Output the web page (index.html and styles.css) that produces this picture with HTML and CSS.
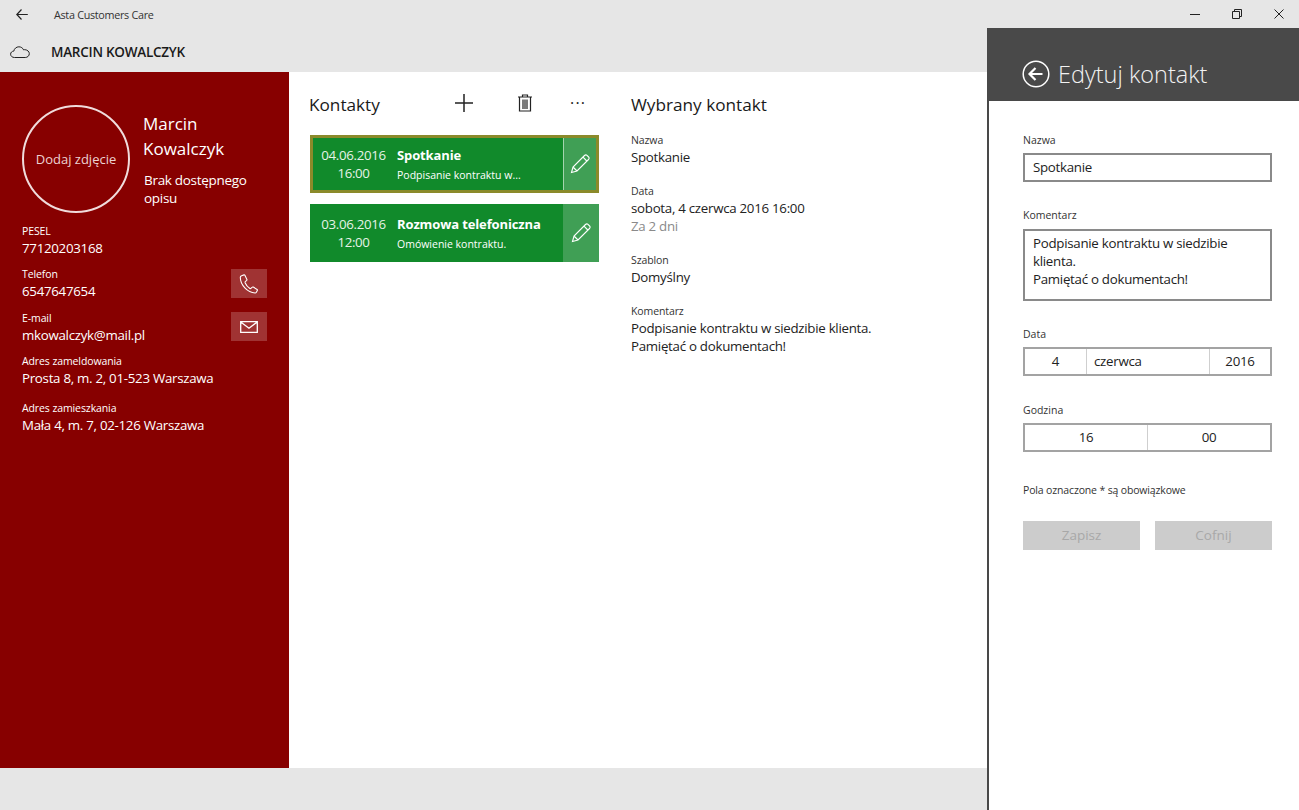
FILE: index.html
```html
<!DOCTYPE html>
<html lang="pl">

<head>
	<meta charset="UTF-8" />
	<title>Asta Customers Care</title>
	<link rel="stylesheet" href="styles.css">
</head>

<body>
	<div class="title-bar">
		<svg class="back-icon" width="12" height="11" viewBox="0 0 12 11"><path d="M5.500.5.800 5.500l4.700 5M.8 5.500h11" fill="none" stroke="#222" stroke-width="1.200"/></svg>
		<span class="app-name">Asta Customers Care</span>
	</div>

	<div class="app-header">
		<svg class="cloud-icon" width="20" height="12" viewBox="0 0 20 12"><path d="M4.500 11.500C2.200 11.500.6 10 .6 8.200c0-1.800 1.400-3 3.200-3.100C4.200 2.700 6.300.8 8.900.8c2.200 0 4 1.300 4.700 3.100 .5-.2 1-.3 1.500-.2 2.200.2 4.200 1.800 4.200 3.900 0 2.200-1.800 3.900-4 3.900z" fill="none" stroke="#222" stroke-width="1"/></svg>
		<span class="client-name">MARCIN KOWALCZYK</span>
	</div>

	<div class="main">
		<div class="client-panel">
			<div class="client-top">
				<div class="photo">Dodaj zdjęcie</div>
				<div class="client-info">
					<div class="client-title">Marcin<br>Kowalczyk</div>
					<div class="client-desc">Brak dostępnego<br>opisu</div>
				</div>
			</div>
			<div class="client-field first">
				<div class="label">PESEL</div>
				<div class="value">77120203168</div>
			</div>
			<div class="client-field with-action">
				<div>
					<div class="label">Telefon</div>
					<div class="value">6547647654</div>
				</div>
				<div class="action">
					<svg width="20" height="20" viewBox="0 0 20 20"><path d="M2.600 1.700 5 .9c.4-.1.700 0 .9.400l2 4.100c.2.400.1.700-.2 1L6.300 7.700c-.3.300-.3.600-.2 1 1 2.500 2.600 4.300 4.800 5.800.4.200.7.200 1-.1l1.400-1.200c.3-.3.600-.3 1-.1l3.800 2.300c.4.200.5.500.3.900l-1 2c-.3.500-.7.700-1.300.700C8.500 18.600 1.300 11 1.300 3.300c0-.8.500-1.300 1.300-1.600z" fill="none" stroke="#fff" stroke-width="1.100"/></svg>
				</div>
			</div>
			<div class="client-field with-action">
				<div>
					<div class="label">E-mail</div>
					<div class="value">mkowalczyk@mail.pl</div>
				</div>
				<div class="action">
					<svg width="18" height="12" viewBox="0 0 18 12"><path d="M.7.7h16.600v10.600H.7zM.7.900 9 7.200 17.300.900" fill="none" stroke="#fff" stroke-width="1.300"/></svg>
				</div>
			</div>
			<div class="client-field">
				<div class="label">Adres zameldowania</div>
				<div class="value">Prosta 8, m. 2, 01-523 Warszawa</div>
			</div>
			<div class="client-field last">
				<div class="label">Adres zamieszkania</div>
				<div class="value">Mała 4, m. 7, 02-126 Warszawa</div>
			</div>
		</div>

		<div class="contacts">
			<div class="contacts-head">
				<h2 class="section-title">Kontakty</h2>
				<svg class="tool-add" width="20" height="20" viewBox="0 0 20 20"><path d="M10 1v18M1 10h18" stroke="#222" stroke-width="1.500"/></svg>
				<svg class="tool-trash" width="16" height="18" viewBox="0 0 16 18"><path d="M1 3h14M5.500 3V1h5v2M2.500 3v14h11V3M6 5.500v9.500M8 5.500v9.500M10 5.500v9.500" fill="none" stroke="#222" stroke-width="1.200"/></svg>
				<span class="tool-more">···</span>
			</div>
			<div class="contact-card selected">
				<div class="card-date">04.06.2016<br>16:00</div>
				<div class="card-body">
					<div class="card-title">Spotkanie</div>
					<div class="card-text">Podpisanie kontraktu w...</div>
				</div>
				<div class="card-edit">
					<svg width="20" height="20" viewBox="0 0 20 20"><path d="M1.500 18.500 3 13 14.500 1.500c.8-.8 1.800-.8 2.500-.1l1.600 1.600c.7.700.7 1.700-.1 2.500L7 17zM3 13l4 4M13 3.200l3.800 3.800" fill="none" stroke="#fff" stroke-width="1.100"/></svg>
				</div>
			</div>
			<div class="contact-card">
				<div class="card-date">03.06.2016<br>12:00</div>
				<div class="card-body">
					<div class="card-title">Rozmowa telefoniczna</div>
					<div class="card-text">Omówienie kontraktu.</div>
				</div>
				<div class="card-edit">
					<svg width="20" height="20" viewBox="0 0 20 20"><path d="M1.500 18.500 3 13 14.500 1.500c.8-.8 1.800-.8 2.500-.1l1.600 1.600c.7.700.7 1.700-.1 2.500L7 17zM3 13l4 4M13 3.200l3.800 3.800" fill="none" stroke="#fff" stroke-width="1.100"/></svg>
				</div>
			</div>
		</div>

		<div class="details">
			<h2 class="section-title">Wybrany kontakt</h2>
			<div class="detail first">
				<div class="label">Nazwa</div>
				<div class="value">Spotkanie</div>
			</div>
			<div class="detail">
				<div class="label">Data</div>
				<div class="value">sobota, 4 czerwca 2016 16:00</div>
				<div class="value muted">Za 2 dni</div>
			</div>
			<div class="detail">
				<div class="label">Szablon</div>
				<div class="value">Domyślny</div>
			</div>
			<div class="detail">
				<div class="label">Komentarz</div>
				<div class="value">Podpisanie kontraktu w siedzibie klienta.<br>Pamiętać o dokumentach!</div>
			</div>
		</div>
	</div>

	<div class="footer-bar"></div>

	<div class="window-buttons">
		<svg width="10" height="10" viewBox="0 0 10 10"><path d="M0 5.500h10" stroke="#222"/></svg>
		<svg width="10" height="10" viewBox="0 0 10 10"><path d="M.5 2.500h7v7h-7zM2.500 2.500v-2h7v7h-2" fill="none" stroke="#222"/></svg>
		<svg width="10" height="10" viewBox="0 0 10 10"><path d="m.5.500 9 9M9.500.500l-9 9" stroke="#222"/></svg>
	</div>

	<div class="flyout">
		<div class="flyout-head">
			<svg width="28" height="28" viewBox="0 0 28 28"><circle cx="14" cy="14" r="12.800" fill="none" stroke="#fff" stroke-width="1.500"/><path d="M13.500 8 7.500 14l6 6M8 14h12.500" fill="none" stroke="#fff" stroke-width="2.200"/></svg>
			<span class="flyout-title">Edytuj kontakt</span>
		</div>
		<div class="flyout-body">
			<div class="form-label">Nazwa</div>
			<div class="input">Spotkanie</div>
			<div class="form-label comment-label">Komentarz</div>
			<div class="input textarea">Podpisanie kontraktu w siedzibie klienta.<br>Pamiętać o dokumentach!</div>
			<div class="form-label date-label">Data</div>
			<div class="picker">
				<div class="cell day">4</div>
				<div class="cell month">czerwca</div>
				<div class="cell year">2016</div>
			</div>
			<div class="form-label time-label">Godzina</div>
			<div class="picker">
				<div class="cell half">16</div>
				<div class="cell half">00</div>
			</div>
			<div class="form-label note">Pola oznaczone * są obowiązkowe</div>
			<div class="form-buttons">
				<div class="btn">Zapisz</div>
				<div class="btn">Cofnij</div>
			</div>
		</div>
	</div>
</body>

</html>
```

FILE: styles.css
```css
body {
	font-family: "Open Sans", "Noto Sans", sans-serif;
	background-color: #fff;
	color: #222;
	margin: 0;
	width: 1299px;
	height: 810px;
	overflow: hidden;
	position: relative;
}

.title-bar {
	height: 28px;
	background-color: #e6e6e6;
	display: flex;
	align-items: center;
	padding-left: 16px;
}

.back-icon {
	margin-right: 26px;
}

.app-name {
	font-size: 10.800px;
	letter-spacing: -0.3px;
	color: #333;
}

.app-header {
	height: 44px;
	background-color: #e6e6e6;
	display: flex;
	align-items: center;
	padding-left: 10px;
	box-sizing: border-box;
	padding-top: 4px;
}

.cloud-icon {
	margin-right: 21px;
}

.client-name {
	font-size: 13.500px;
	font-weight: 600;
	color: #1a1a1a;
	letter-spacing: -0.25px;
}

.main {
	display: flex;
	height: 696px;
}

.client-panel {
	width: 289px;
	box-sizing: border-box;
	background-color: #870000;
	color: #fff;
	padding: 33px 22px 0;
}

.client-top {
	display: flex;
}

.photo {
	width: 108px;
	height: 108px;
	box-sizing: border-box;
	border: 2px solid #f0dcdc;
	border-radius: 50%;
	display: flex;
	align-items: center;
	justify-content: center;
	font-size: 13px;
	color: #ecd2d2;
}

.client-info {
	margin-left: 13px;
	padding-top: 7px;
}

.client-title {
	font-size: 17px;
	line-height: 24.500px;
}

.client-desc {
	font-size: 13.500px;
	line-height: 18px;
	margin-top: 10px;
	margin-left: 1px;
	letter-spacing: -0.3px;
}

.label {
	font-size: 10.500px;
	line-height: 16px;
	letter-spacing: -0.1px;
}

.value {
	font-size: 13.300px;
	line-height: 18px;
	letter-spacing: -0.28px;
}

.client-field {
	height: 34px;
	margin-top: 9px;
}

.client-field.first {
	margin-top: 10px;
}

.client-field.last {
	margin-top: 13px;
}

.with-action {
	display: flex;
	justify-content: space-between;
}

.with-action + .with-action {
	margin-top: 10px;
}

.action {
	width: 36px;
	height: 29px;
	background-color: #a03333;
	display: flex;
	align-items: center;
	justify-content: center;
	margin-top: 3px;
}

.with-action + .with-action .action {
	margin-top: 2px;
}

.contacts {
	width: 290px;
	margin-left: 20px;
}

.contacts-head {
	height: 63px;
	display: flex;
	align-items: flex-start;
}

.section-title {
	font-size: 17.200px;
	font-weight: 400;
	line-height: 24px;
	margin: 21px 0 0;
	color: #1a1a1a;
}

.contacts-head .section-title {
	width: 145px;
}

.tool-add {
	margin-top: 21px;
}

.tool-trash {
	margin-top: 22px;
	margin-left: 43px;
}

.tool-more {
	margin-top: 19px;
	margin-left: 37px;
	font-size: 16px;
	line-height: 24px;
	letter-spacing: 1.200px;
}

.contact-card {
	width: 289px;
	height: 58px;
	margin-left: 1px;
	margin-bottom: 11px;
	box-sizing: border-box;
	background-color: #118a2b;
	color: #fff;
	display: flex;
	align-items: center;
}

.contact-card.selected {
	outline: 3px solid #8b8a2a;
	outline-offset: -3px;
}

.card-date {
	width: 87px;
	text-align: center;
	font-size: 13.300px;
	line-height: 18.500px;
	color: #e6f3e8;
	letter-spacing: -0.35px;
}

.card-body {
	flex: 1;
	padding-top: 2px;
}

.card-title {
	font-size: 13px;
	font-weight: 700;
	line-height: 18px;
	letter-spacing: -0.12px;
}

.card-text {
	font-size: 10.500px;
	line-height: 18px;
	margin-top: 2px;
}

.card-edit {
	width: 36px;
	height: 58px;
	background-color: #409f55;
	display: flex;
	align-items: center;
	justify-content: center;
}

.selected .card-edit {
	border-left: 1px solid #a3d4ad;
	border-right: 3px solid #b6a348;
	border-top: 3px solid #b6a348;
	border-bottom: 3px solid #b6a348;
	box-sizing: border-box;
}

.details {
	margin-left: 32px;
}

.detail {
	margin-top: 18px;
}

.detail.first {
	margin-top: 16px;
}

.detail .label {
	color: #333;
	line-height: 15px;
}

.muted {
	color: #8a8a8a;
}

.window-buttons {
	position: absolute;
	top: 9px;
	left: 1190px;
	display: flex;
	align-items: center;
	gap: 32px;
}

.footer-bar {
	height: 42px;
	background-color: #e6e6e6;
}

.flyout {
	position: absolute;
	top: 28px;
	left: 987px;
	width: 312px;
	height: 782px;
	box-sizing: border-box;
	background-color: #fff;
	border-left: 2px solid #494949;
}

.flyout-head {
	height: 73px;
	margin-left: -2px;
	background-color: #494949;
	color: #f2f2f2;
	display: flex;
	align-items: center;
	padding-left: 35px;
	padding-top: 18px;
	box-sizing: border-box;
}

.flyout-title {
	font-size: 23.500px;
	font-weight: 300;
	margin-left: 8px;
}

.flyout-body {
	padding: 31px 0 0 34px;
	width: 249px;
}

.form-label {
	font-size: 10.500px;
	line-height: 17px;
	color: #333;
	margin-bottom: 4px;
}

.input {
	height: 29px;
	box-sizing: border-box;
	border: 2px solid #8a8a8a;
	padding-left: 8px;
	font-size: 13.300px;
	line-height: 24px;
	letter-spacing: -0.28px;
}

.textarea {
	height: 72px;
	line-height: 18px;
	padding-top: 3px;
	width: 249px;
}

.comment-label {
	margin-top: 25px;
	margin-bottom: 5px;
}

.date-label {
	margin-top: 25px;
}

.time-label {
	margin-top: 26px;
}

.picker {
	display: flex;
	height: 29px;
	box-sizing: border-box;
	border: 2px solid #a3a3a3;
	font-size: 13.300px;
	line-height: 25px;
	letter-spacing: -0.28px;
}

.cell {
	text-align: center;
	box-sizing: border-box;
	border-left: 1px solid #cfcfcf;
}

.cell:first-child {
	border-left: 0;
}

.day {
	width: 61px;
}

.month {
	width: 123px;
	text-align: left;
	padding-left: 7px;
}

.year {
	flex: 1;
}

.half {
	flex: 1;
}

.note {
	margin-top: 30px;
	margin-bottom: 22px;
	white-space: nowrap;
	letter-spacing: -0.15px;
}

.form-buttons {
	display: flex;
	justify-content: space-between;
}

.btn {
	width: 117px;
	height: 29px;
	background-color: #cccccc;
	color: #a8a8a8;
	font-size: 13.500px;
	line-height: 29px;
	text-align: center;
}
```
